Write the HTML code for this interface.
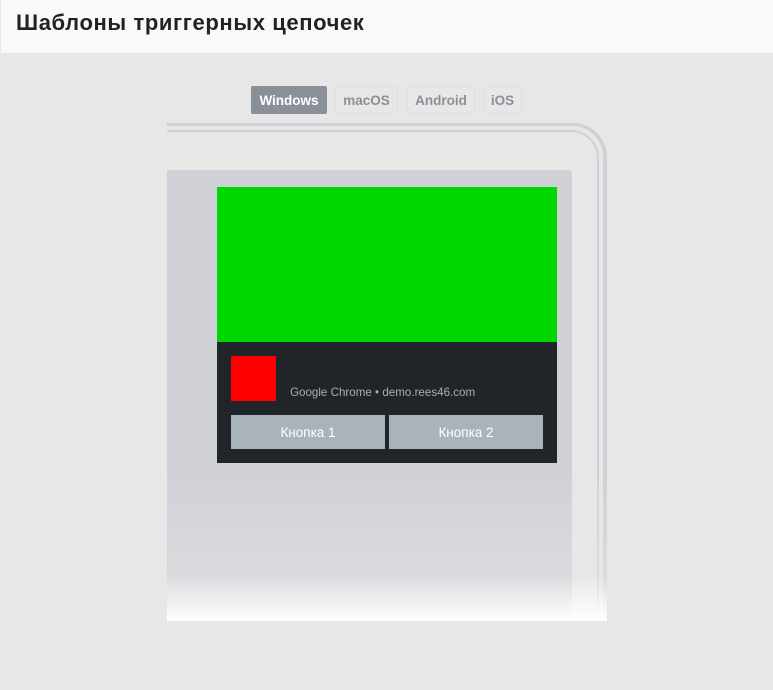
<!DOCTYPE html>
<html><head><meta charset="utf-8"><style>
*{margin:0;padding:0;box-sizing:border-box}
body{width:773px;height:690px;background:#e7e7e7;font-family:"Liberation Sans","DejaVu Sans",sans-serif;position:relative;overflow:hidden}
.hdr{position:absolute;left:1px;top:0;width:772px;height:53px;background:#f9f9f9}
.hdr h1{position:absolute;left:15px;top:10px;font-size:22px;font-weight:600;color:#222;letter-spacing:0.6px}
.tab{position:absolute;top:86px;height:28px;border:1px solid #e0e0e2;border-radius:2px;font-size:13.5px;font-weight:bold;color:#8a9097;text-align:center;line-height:27px}
.tab.on{background:#8a9097;color:#fff;border-color:#8a9097}
.frame1{position:absolute;left:167px;top:123px;width:440px;height:520px;border-top:3px solid #d0d0d6;border-right:4px solid #d0d0d6;border-top-right-radius:34px}
.frame2{position:absolute;left:167px;top:130px;width:432px;height:520px;border-top:2px solid #d0d0d6;border-right:2px solid #d0d0d6;border-top-right-radius:28px}
.screen{position:absolute;left:167px;top:170px;width:405px;height:460px;background:#d0d0d7;border-top-right-radius:3px}
.fade{position:absolute;left:167px;top:470px;width:440px;height:151px;background:linear-gradient(to bottom,rgba(231,231,231,0) 0%,rgba(231,231,231,0.45) 70%,#fff 100%)}
.below{position:absolute;left:160px;top:621px;width:460px;height:69px;background:#e7e7e7}
.green{position:absolute;left:217px;top:187px;width:340px;height:155px;background:#00d700}
.dark{position:absolute;left:217px;top:342px;width:340px;height:121px;background:#212429}
.red{position:absolute;left:231px;top:356px;width:45px;height:45px;background:#f00}
.src{position:absolute;left:290px;top:386px;font-size:11.6px;color:#a9aeb5}
.btn{position:absolute;top:415px;width:154px;height:34px;background:#aab3ba;color:#fff;font-size:13.5px;text-align:center;line-height:35px}
</style></head><body>
<div class="hdr"><h1>Шаблоны триггерных цепочек</h1></div>
<div class="tab on" style="left:251px;width:76px">Windows</div>
<div class="tab" style="left:335px;width:63px">macOS</div>
<div class="tab" style="left:407px;width:68px">Android</div>
<div class="tab" style="left:483px;width:39px">iOS</div>
<div class="frame1"></div>
<div class="frame2"></div>
<div class="screen"></div>
<div class="green"></div>
<div class="dark"></div>
<div class="red"></div>
<div class="src">Google Chrome • demo.rees46.com</div>
<div class="btn" style="left:231px">Кнопка 1</div>
<div class="btn" style="left:389px">Кнопка 2</div>
<div class="fade"></div>
<div class="below"></div>
</body></html>
